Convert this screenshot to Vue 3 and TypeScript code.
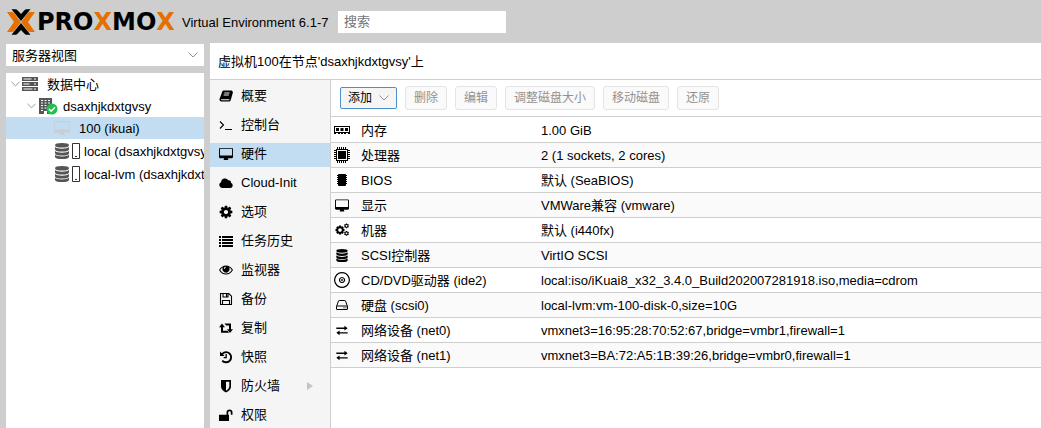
<script setup lang="ts">
import { h, ref } from 'vue'

interface Glyph {
  box: string
  fill?: string
  stroke?: string
  width?: number
}

const glyphs: Record<string, Glyph> = {
  book: {
    box: '0 0 14 14',
    fill: 'M4.8 1.5h7.6q1 0 .8.9l.4.2q.5.3.3 1l-2.2 7.6q-.4 1.3-1.6 1.3H2.4Q.7 12.500.5 10.800.4 10 .8 9.200L3.300 2.600q.4-1.100 1.500-1.100zM5.500 3.600l-.3.900h5.200l.3-.9zM4.800 5.600l-.3.900h5.200l.3-.9zM2 10.200q-.3 1.100.8 1.100h6.900q.5 0 .7-.6l.2-.500z',
  },
  terminal: { box: '0 0 14 14', stroke: 'M1 3.500L4.500 7 1 10.500M6 11.500h7', width: 1.1 },
  desktop: {
    box: '0 0 1920 1664',
    fill: 'M1792 992v-832q0-13-9.5-22.500t-22.500-9.500h-1600q-13 0-22.500 9.500t-9.500 22.500v832q0 13 9.500 22.500t22.500 9.500h1600q13 0 22.500-9.500t9.500-22.500zm128-832v1088q0 66-47 113t-113 47h-544q0 37 16 77.500t32 71 16 43.500q0 26-19 45t-45 19h-512q-26 0-45-19t-19-45q0-14 16-44t32-70 16-78h-544q-66 0-113-47t-47-113v-1088q0-66 47-113t113-47h1600q66 0 113 47t47 113z',
  },
  cloud: { box: '0 0 14 14', fill: 'M3.200 12A3 3 0 0 1 2 6.300 4 4 0 0 1 9.300 4.200 2.400 2.400 0 0 1 12 6.800 2.700 2.700 0 0 1 11.300 12z' },
  cog: {
    box: '50 50 1692 1692',
    fill: 'M1152 896q0-106-75-181t-181-75-181 75-75 181 75 181 181 75 181-75 75-181zm512-109v222q0 12-8 23t-20 13l-185 28q-19 54-39 91 35 50 107 138 10 12 10 25t-9 23q-27 37-99 108t-94 71q-12 0-26-9l-138-108q-44 23-91 38-16 136-29 186-7 28-36 28h-222q-14 0-24.500-8.500t-11.500-21.500l-28-184q-49-16-90-37l-141 107q-10 9-25 9-14 0-25-11-126-114-165-168-7-10-7-23 0-12 8-23 15-21 51-66.500t54-70.500q-27-50-41-99l-183-27q-13-2-21-12.500t-8-23.500v-222q0-12 8-23t19-13l186-28q14-46 39-92-40-57-107-138-10-12-10-24 0-10 9-23 26-36 98.500-107.500t94.500-71.500q13 0 26 10l138 107q44-23 91-38 16-136 29-186 7-28 36-28h222q14 0 24.500 8.500t11.500 21.500l28 184q49 16 90 37l142-107q9-9 24-9 13 0 25 10 129 119 165 170 7 8 7 22 0 12-8 23-15 21-51 66.500t-54 70.500q26 50 41 98l183 28q13 2 21 12.500t8 23.500z',
  },
  list: {
    box: '0 0 14 14',
    fill: 'M0 2h2v2H0zM3 2h11v2H3zM0 5h2v2H0zM3 5h11v2H3zM0 8h2v2H0zM3 8h11v2H3zM0 11h2v2H0zM3 11h11v2H3z',
  },
  eye: {
    box: '0 0 14 14',
    fill: 'M7 2.500Q11.300 2.500 14 7 11.300 11.500 7 11.500T0 7Q2.700 2.500 7 2.500zM1.200 7Q3.500 10.500 7 10.500T12.800 7Q11.900 5.500 10 4.300A3.500 3.500 0 1 1 4 4.300Q2.100 5.500 1.200 7zM7 3.800A2 2 0 0 0 4.900 5.900h.8A1.300 1.300 0 0 1 7 4.600z',
  },
  save: {
    box: '0 0 14 14',
    stroke: 'M1.500 1.500h8.300l2.700 2.700v8.300h-11zM4 1.500v3.500h5v-3.500M3.500 12.500v-4h7v4M7.500 2v2.500',
    width: 1.100,
  },
  retweet: {
    box: '0 0 14 14',
    fill: 'M3 2.500l3 3.700H4v3.600h4.500l1.600 2H2V6.200H0zM5.500 2.500H12v5.700h2l-3 3.700-3-3.700h2V4.500H7.100z',
  },
  history: {
    box: '0 0 14 14',
    fill: 'M1 1.500l1.700 1.700A6 6 0 1 1 2.500 11.200l1.500-1.300A4.100 4.100 0 1 0 4 4.500L5.600 6H1zM6.500 4h1.300v4.200H4.700V7h1.800z',
  },
  shield: { box: '0 0 14 14', fill: 'M2 1h10v6.500Q12 11 7 13.500 2 11 2 7.500zM7 2.700v9Q10.300 9.700 10.300 7.500V2.700z' },
  unlock: {
    box: '0 0 14 14',
    fill: 'M0 6.700h7.500V4.500a3 3 0 0 1 6 0v2.200h-1.700V4.500a1.300 1.300 0 0 0-2.600 0v2.200H10V13H0z',
  },
  memory: {
    box: '0 0 16 16',
    fill: 'M0 4h16v8h-2v-1h-2v1h-2v-1H9v1H7v-1H6v1H4v-1H2v1H0zM1 5v5h14V5zM2 6h3v3H2zM6.500 6h3v3h-3zM11 6h3v3h-3z',
  },
  cpu: {
    box: '0 0 16 16',
    fill: 'M2 2h12v12H2zM3 3v10h10V3zM4 4h8v8H4zM3 0h1v2H3zM5 0h1v2H5zM7 0h1v2H7zM9 0h1v2H9zM11 0h1v2h-1zM3 14h1v2H3zM5 14h1v2H5zM7 14h1v2H7zM9 14h1v2H9zM11 14h1v2h-1zM0 3h2v1H0zM0 5h2v1H0zM0 7h2v1H0zM0 9h2v1H0zM0 11h2v1H0zM14 3h2v1h-2zM14 5h2v1h-2zM14 7h2v1h-2zM14 9h2v1h-2zM14 11h2v1h-2z',
  },
  chip: {
    box: '0 0 16 16',
    fill: 'M4 2.500L5 2h6l1 .5v11l-1 .5H5l-1-.5zM3 3h1v1H3zM3 5h1v1H3zM3 7h1v1H3zM3 9h1v1H3zM3 11h1v1H3zM12 3h1v1h-1zM12 5h1v1h-1zM12 7h1v1h-1zM12 9h1v1h-1zM12 11h1v1h-1z',
  },
  cogs: {
    box: '0 0 16 16',
    fill: 'M5 3.500h2l.3 1.300 1.200-.6 1.300 1.300-.7 1.100 1.400.4v2l-1.400.4.7 1.200-1.300 1.300-1.200-.7L7 12.500H5l-.3-1.300-1.200.7-1.300-1.300.7-1.200L1.500 9V7l1.400-.4-.7-1.100 1.300-1.300 1.200.6zM6 6.200a1.800 1.800 0 1 0 .010 0zM12 1.500h1l.4.8 1-.1.5.9-.6.800.6.800-.5.900-1-.1-.4.800h-1l-.4-.8-1 .1-.5-.9.600-.8-.6-.8.500-.9 1 .1zM12.500 3a.9.9 0 1 0 .010 0zM12 9h1l.4.800 1-.1.500.900-.6.800.6.800-.5.900-1-.1-.4.800h-1l-.4-.8-1 .1-.5-.9.600-.8-.6-.8.500-.9 1 .1zM12.500 10.500a.9.9 0 1 0 .010 0z',
  },
  database: {
    box: '0 0 16 16',
    fill: 'M8 0q7 0 7 2.300T8 4.600 1 2.300 8 0zM1 4q2 1.700 7 1.700T15 4v2.300Q15 8.600 8 8.600T1 6.300zM1 8q2 1.700 7 1.700T15 8v2.200q0 2.300-7 2.300t-7-2.300zM1 11.800q2 1.700 7 1.700t7-1.700v1.900Q15 16 8 16t-7-2.300z',
  },
  disc: {
    box: '0 0 16 16',
    stroke: 'M8 .700a7.300 7.300 0 1 0 .010 0zM8 5.500a2.500 2.500 0 1 0 .010 0zM8 7.600a.4.400 0 1 0 .010 0z',
    width: 1.200,
  },
  hdd: {
    box: '0 0 16 16',
    stroke: 'M2.500 9.500l2-5.500q.2-.5.700-.5h5.600q.5 0 .7.500l2 5.500v2.500q0 .5-.5.500H3q-.5 0-.5-.5zM2.500 9.500q0-.5.500-.5h10q.5 0 .5.500M9.500 10.800h1M11.500 10.800h1',
    width: 1,
  },
  exchange: { box: '0 0 16 16', fill: 'M1 4.300h10V2.200L15 5.100 11 8V6H1zM15 10H5V8l-4 2.900 4 2.900v-2.100h10z' },
  server: {
    box: '0 0 16 14',
    fill: 'M0 0h16v4H0zM1.500 1.500v1h8v-1zM12 1.500v1h2v-1zM0 5h16v4H0zM1.500 6.500v1h6v-1zM12 6.500v1h2v-1zM0 10h16v4H0zM1.500 11.500v1h9v-1zM12 11.500v1h2v-1z',
  },
  building: {
    box: '0 0 16 16',
    fill: 'M1 0h13v16H9v-3H6v3H1zM3 2v1h2V2zM6.500 2v1h2V2zM10 2v1h2V2zM3 4.500v1h2v-1zM6.500 4.500v1h2v-1zM10 4.500v1h2v-1zM3 7v1h2V7zM6.500 7v1h2V7zM10 7v1h2V7zM3 9.500v1h2v-1zM6.500 9.500v1h2v-1zM10 9.500v1h2v-1zM3 12v1h2v-1z',
  },
  drive: { box: '0 0 8 16', stroke: 'M.5 .5h7v15h-7zM3 13.500h2', width: 1 },
  down: { box: '0 0 10 6', stroke: 'M.5.5L5 5 9.500.5', width: 1 },
  right: { box: '0 0 6 8', fill: 'M0 0l6 4-6 4z' },
}

const Icon = (props: { name: string }) => {
  const g = glyphs[props.name]
  return h('svg', { viewBox: g.box, 'aria-hidden': 'true' }, [
    g.fill ? h('path', { d: g.fill, fill: 'currentColor', 'fill-rule': 'evenodd' }) : null,
    g.stroke ? h('path', { d: g.stroke, fill: 'none', stroke: 'currentColor', 'stroke-width': g.width }) : null,
  ])
}
Icon.props = ['name']

const search = ref('')
const view = ref('server')
const activeMenu = ref('硬件')

const menu = [
  { label: '概要', icon: 'book' },
  { label: '控制台', icon: 'terminal' },
  { label: '硬件', icon: 'desktop' },
  { label: 'Cloud-Init', icon: 'cloud' },
  { label: '选项', icon: 'cog' },
  { label: '任务历史', icon: 'list' },
  { label: '监视器', icon: 'eye' },
  { label: '备份', icon: 'save' },
  { label: '复制', icon: 'retweet' },
  { label: '快照', icon: 'history' },
  { label: '防火墙', icon: 'shield', more: true },
  { label: '权限', icon: 'unlock' },
]

const hardware = [
  { icon: 'memory', name: '内存', value: '1.00 GiB' },
  { icon: 'cpu', name: '处理器', value: '2 (1 sockets, 2 cores)' },
  { icon: 'chip', name: 'BIOS', value: '默认 (SeaBIOS)' },
  { icon: 'desktop', name: '显示', value: 'VMWare兼容 (vmware)' },
  { icon: 'cogs', name: '机器', value: '默认 (i440fx)' },
  { icon: 'database', name: 'SCSI控制器', value: 'VirtIO SCSI' },
  { icon: 'disc', name: 'CD/DVD驱动器 (ide2)', value: 'local:iso/iKuai8_x32_3.4.0_Build202007281918.iso,media=cdrom' },
  { icon: 'hdd', name: '硬盘 (scsi0)', value: 'local-lvm:vm-100-disk-0,size=10G' },
  { icon: 'exchange', name: '网络设备 (net0)', value: 'vmxnet3=16:95:28:70:52:67,bridge=vmbr1,firewall=1' },
  { icon: 'exchange', name: '网络设备 (net1)', value: 'vmxnet3=BA:72:A5:1B:39:26,bridge=vmbr0,firewall=1' },
]

const actions = ['删除', '编辑', '调整磁盘大小', '移动磁盘', '还原']
</script>

<template>
  <div class="app">
    <header class="top">
      <div class="brand">
        <svg class="emblem" viewBox="0 0 28 26" aria-hidden="true">
          <path fill="#e57000" d="M0 3h5q1.200 0 2 .9L13.800 13 7 22.100q-.8.900-2 .9H0l7-10zM28 3h-5q-1.200 0-2 .9L14.200 13l6.800 9.100q.8.900 2 .9h5l-7-10z" />
          <path fill="#000" d="M4.500.3h4q1.200 0 2 .9L14 5l3.500-3.800q.8-.9 2-.9h4L14 12zM4.500 25.700h4q1.200 0 2-.9L14 21l3.500 3.800q.8.900 2 .9h4L14 14z" />
        </svg>
        <span class="wordmark">PRO<b>X</b>MO<b>X</b></span>
      </div>
      <span class="version">Virtual Environment 6.1-7</span>
      <input v-model="search" class="search" type="text" placeholder="搜索" aria-label="搜索" />
    </header>

    <div class="body">
      <aside class="left">
        <div class="combo">
          <select v-model="view" aria-label="视图">
            <option value="server">服务器视图</option>
          </select>
          <Icon name="down" class="chevron" />
        </div>
        <ul class="tree" role="tree">
          <li class="node" role="treeitem" aria-expanded="true">
            <Icon name="down" class="twisty" />
            <Icon name="server" class="node-icon" />
            <span class="node-text">数据中心</span>
          </li>
          <li class="node depth-1" role="treeitem" aria-expanded="true">
            <Icon name="down" class="twisty" />
            <span class="badged">
              <Icon name="building" class="node-icon" />
              <svg class="badge" viewBox="0 0 12 12" aria-hidden="true">
                <circle cx="6" cy="6" r="5.500" fill="#21bf4b" />
                <path d="M3 6l2.200 2.200L9 4.300" fill="none" stroke="#fff" stroke-width="1.600" />
              </svg>
            </span>
            <span class="node-text">dsaxhjkdxtgvsy</span>
          </li>
          <li class="node depth-2 selected" role="treeitem" aria-selected="true">
            <Icon name="desktop" class="node-icon off" />
            <span class="node-text">100 (ikuai)</span>
          </li>
          <li v-for="s in ['local', 'local-lvm']" :key="s" class="node depth-2 storage" role="treeitem">
            <Icon name="database" class="node-icon" />
            <Icon name="drive" class="drive" />
            <span>{{ s }} (dsaxhjkdxtgvsy)</span>
          </li>
        </ul>
      </aside>

      <main class="main">
        <h1 class="title">虚拟机100在节点'dsaxhjkdxtgvsy'上</h1>
        <div class="content">
          <nav class="menu">
            <a
              v-for="m in menu"
              :key="m.label"
              href="#"
              :class="{ active: m.label === activeMenu }"
              @click.prevent="activeMenu = m.label"
            >
              <Icon :name="m.icon" class="menu-icon" />
              <span>{{ m.label }}</span>
              <Icon v-if="m.more" name="right" class="more" />
            </a>
          </nav>
          <section class="panel">
            <div class="toolbar">
              <button type="button" class="add">添加<Icon name="down" class="chevron" /></button>
              <button v-for="a in actions" :key="a" type="button" disabled>{{ a }}</button>
            </div>
            <table>
              <colgroup>
                <col class="col-icon" />
                <col class="col-name" />
                <col />
              </colgroup>
              <tbody>
                <tr v-for="r in hardware" :key="r.name">
                  <td class="cell-icon"><Icon :name="r.icon" :class="['hw-icon', r.icon]" /></td>
                  <th scope="row">{{ r.name }}</th>
                  <td>{{ r.value }}</td>
                </tr>
              </tbody>
            </table>
          </section>
        </div>
      </main>
    </div>
  </div>
</template>

<style>
body {
  margin: 0;
}
</style>

<style scoped>
.app {
  display: flex;
  flex-direction: column;
  height: 100vh;
  overflow: hidden;
  background: #cecece;
  color: #000;
  font: 13px/20px "Liberation Sans", "Noto Sans CJK SC", sans-serif;
}
.app * {
  box-sizing: border-box;
}
svg {
  display: block;
  flex: none;
}
.top {
  display: flex;
  flex: none;
  align-items: center;
  height: 43px;
  padding-left: 7px;
}
.brand {
  display: flex;
  align-items: center;
  gap: 2px;
  width: 175px;
}
.emblem {
  width: 28px;
  height: 26px;
}
.wordmark {
  font: bold 24px/24px "DejaVu Sans", sans-serif;
}
.wordmark b {
  color: #e57000;
}
.version {
  width: 156px;
  padding-top: 2px;
  white-space: nowrap;
}
.search {
  width: 168px;
  height: 22px;
  padding: 0 6px;
  border: 0;
  background: #fff;
  font: inherit;
}
.search::placeholder {
  color: #757575;
}
.body {
  display: flex;
  flex: 1;
  min-height: 0;
}
.left {
  display: flex;
  flex: none;
  flex-direction: column;
  gap: 7px;
  width: 210px;
  padding: 1px 6px 0;
}
.combo {
  display: flex;
  align-items: center;
  height: 22px;
  padding-right: 6px;
  background: #fff;
}
.combo select {
  flex: 1;
  height: 22px;
  padding: 2px 6px 0;
  border: 0;
  background: transparent;
  color: inherit;
  font: inherit;
  appearance: none;
}
.chevron {
  width: 10px;
  height: 6px;
  color: #919191;
}
.tree {
  flex: 1;
  margin: 0;
  padding: 0;
  overflow: hidden;
  background: #fff;
  list-style: none;
}
.node {
  display: flex;
  align-items: center;
  height: 22px;
  padding-left: 5px;
  white-space: nowrap;
}
.node > span:last-child {
  padding-top: 2px;
}
.depth-1 {
  padding-left: 21px;
}
.depth-2 {
  padding-left: 48px;
}
.selected {
  background: #c2ddf2;
}
.twisty {
  width: 9px;
  height: 6px;
  margin-right: 2px;
  color: #919191;
}
.node-icon {
  width: 16px;
  height: 16px;
  color: #555;
}
.off {
  height: 14px;
  color: #c8ced4;
}
.node-text {
  margin-left: 9px;
}
.badged {
  position: relative;
}
.badge {
  position: absolute;
  right: -4px;
  bottom: -1px;
  width: 12px;
  height: 12px;
}
.storage {
  height: 23px;
}
.drive {
  width: 8px;
  height: 16px;
  margin: 0 4px 0 2px;
  color: #333;
}
.main {
  display: flex;
  flex: 1;
  flex-direction: column;
  min-width: 0;
  background: #fff;
}
.title {
  flex: none;
  height: 37px;
  margin: 0;
  padding-left: 8px;
  border-bottom: 1px solid #cfcfcf;
  font-size: 13px;
  font-weight: normal;
  line-height: 37px;
}
.content {
  display: flex;
  flex: 1;
  min-height: 0;
}
.menu {
  display: flex;
  flex: none;
  flex-direction: column;
  gap: 5px;
  width: 121px;
  padding-top: 5px;
  overflow: hidden;
  border-right: 1px solid #cfcfcf;
  background: #f5f5f5;
}
.menu a {
  display: flex;
  flex: none;
  align-items: center;
  height: 24px;
  padding: 0 17px 2px 9px;
  color: inherit;
  text-decoration: none;
}
.menu .active {
  background: #c2ddf2;
}
.menu-icon {
  width: 14px;
  height: 14px;
  margin-right: 8px;
}
.more {
  width: 6px;
  height: 8px;
  margin-left: auto;
  color: #c4c4c4;
}
.panel {
  flex: 1;
  min-width: 0;
}
.toolbar {
  display: flex;
  align-items: center;
  gap: 8px;
  height: 37px;
  padding-left: 9px;
  border-bottom: 1px solid #cfcfcf;
}
.toolbar button {
  height: 24px;
  padding: 0 8px;
  border: 1px solid #e4e4e4;
  border-radius: 3px;
  background: #fafafa;
  color: #919191;
  font: 12px/20px "Liberation Sans", "Noto Sans CJK SC", sans-serif;
  white-space: nowrap;
}
.toolbar .add {
  display: flex;
  align-items: center;
  gap: 7px;
  height: 22px;
  padding: 0 7px;
  border-color: #4b8fcb;
  border-radius: 2px;
  background: #f5f5f5;
  color: #000;
}
table {
  width: 100%;
  border-collapse: separate;
  border-spacing: 0;
  table-layout: fixed;
}
.col-icon {
  width: 30px;
}
.col-name {
  width: 180px;
}
th,
td {
  height: 25px;
  padding: 2px 0 0;
  border-bottom: 1px solid #cfcfcf;
  font-weight: normal;
  text-align: left;
  white-space: nowrap;
}
tr:first-child > * {
  height: 26px;
}
tr:nth-child(even) {
  background: #fafafa;
}
td.cell-icon {
  padding: 0 0 0 3px;
}
.hw-icon {
  width: 16px;
  height: 16px;
}
.hw-icon.database,
.hw-icon.exchange,
.hw-icon.desktop {
  width: 14px;
  height: 13px;
  margin-left: 1px;
}
</style>
